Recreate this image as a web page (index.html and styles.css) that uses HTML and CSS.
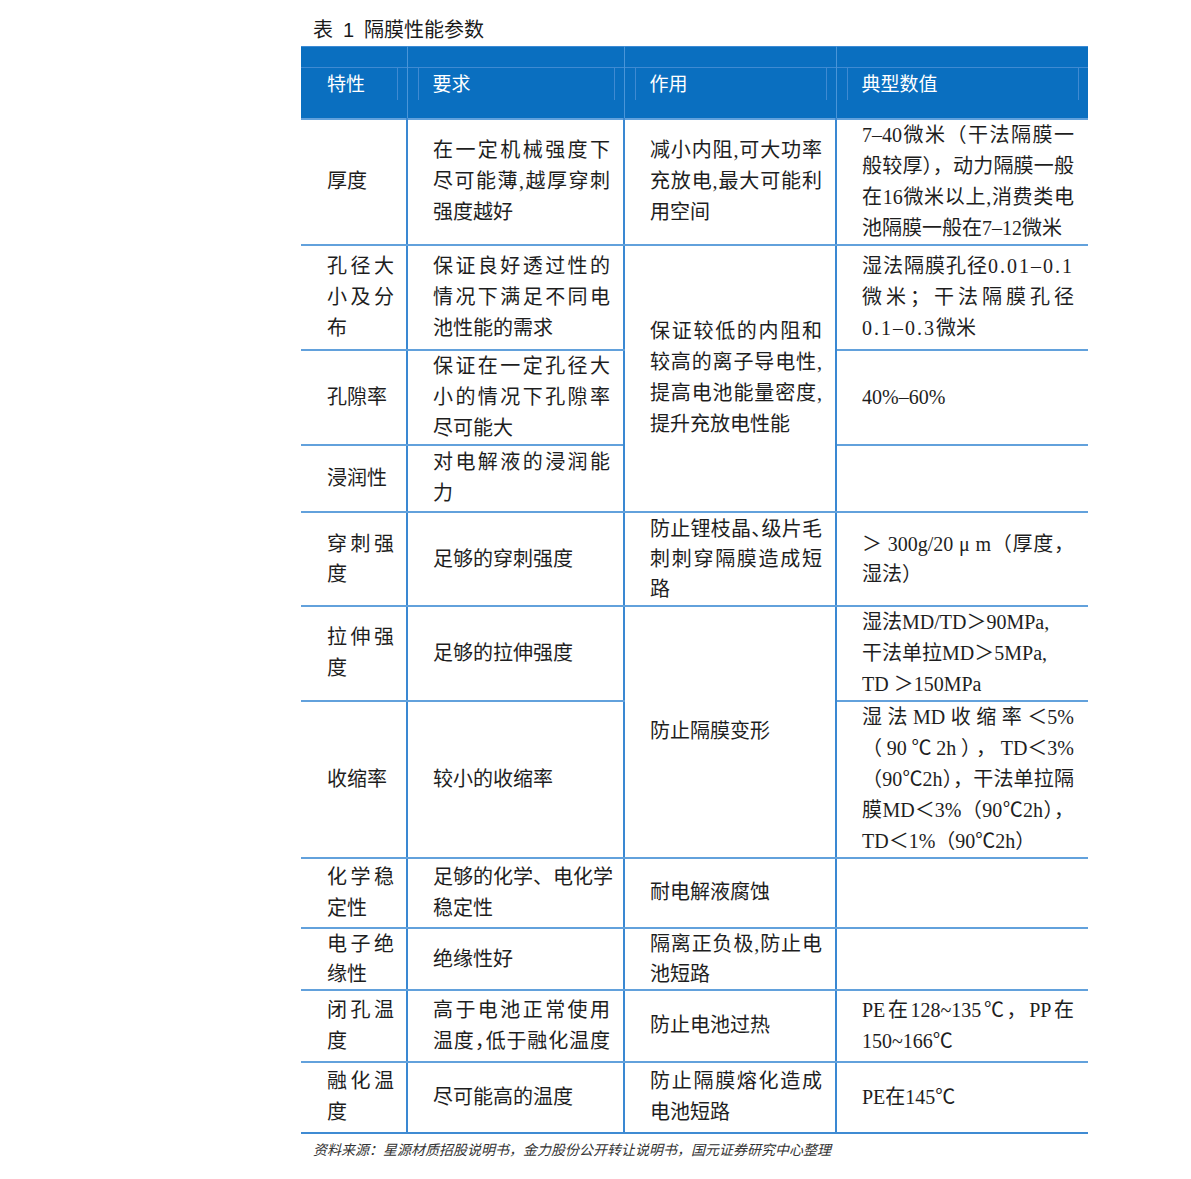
FILE: index.html
```html
<!DOCTYPE html>
<html lang="zh-CN">
<head>
<meta charset="utf-8">
<title>表 1 隔膜性能参数</title>
<link rel="stylesheet" href="styles.css">
</head>
<body>
<div class="page">
  <div class="title">表&ensp;1&ensp;隔膜性能参数</div>
  <table class="spec">
    <colgroup>
      <col class="c1"><col class="c2"><col class="c3"><col class="c4">
    </colgroup>
    <thead>
      <tr>
        <th><div class="hb"><div class="hi first">特性</div></div></th>
        <th><div class="hb"><div class="hi">要求</div></div></th>
        <th><div class="hb"><div class="hi">作用</div></div></th>
        <th><div class="hb"><div class="hi">典型数值</div></div></th>
      </tr>
    </thead>
    <tbody>
      <tr>
        <td>厚度</td>
        <td><span class="l j">在一定机械强度下</span><span class="l j">尽可能薄,越厚穿刺</span><span class="l">强度越好</span></td>
        <td><span class="l j">减小内阻,可大功率</span><span class="l j">充放电,最大可能利</span><span class="l">用空间</span></td>
        <td><span class="l j">7–40微米（干法隔膜一</span><span class="l j">般较厚<span class="hw">）</span>，动力隔膜一般</span><span class="l j">在16微米以上,消费类电</span><span class="l">池隔膜一般在7–12微米</span></td>
      </tr>
      <tr>
        <td><span class="l j">孔径大</span><span class="l j">小及分</span><span class="l">布</span></td>
        <td><span class="l j">保证良好透过性的</span><span class="l j">情况下满足不同电</span><span class="l">池性能的需求</span></td>
        <td rowspan="3"><span class="l j">保证较低的内阻和</span><span class="l j">较高的离子导电性,</span><span class="l j">提高电池能量密度,</span><span class="l">提升充放电性能</span></td>
        <td><span class="l j">湿法隔膜孔径<span class="sp">0.01–0.1</span></span><span class="l j">微米；干法隔膜孔径</span><span class="l"><span class="sp">0.1–0.3</span>微米</span></td>
      </tr>
      <tr>
        <td>孔隙率</td>
        <td><span class="l j">保证在一定孔径大</span><span class="l j">小的情况下孔隙率</span><span class="l">尽可能大</span></td>
        <td>40%–60%</td>
      </tr>
      <tr>
        <td>浸润性</td>
        <td><span class="l j">对电解液的浸润能</span><span class="l">力</span></td>
        <td></td>
      </tr>
      <tr class="tight">
        <td><span class="l j">穿刺强</span><span class="l">度</span></td>
        <td>足够的穿刺强度</td>
        <td><span class="l j">防止锂枝晶<span class="hw">、</span>级片毛</span><span class="l j">刺刺穿隔膜造成短</span><span class="l">路</span></td>
        <td><span class="l j">＞ 300g/20 μ m（厚度，</span><span class="l">湿法）</span></td>
      </tr>
      <tr>
        <td><span class="l j">拉伸强</span><span class="l">度</span></td>
        <td>足够的拉伸强度</td>
        <td rowspan="2">防止隔膜变形</td>
        <td><span class="l n">湿法MD/TD＞90MPa,</span><span class="l n">干法单拉MD＞5MPa,</span><span class="l n">TD ＞150MPa</span></td>
      </tr>
      <tr>
        <td>收缩率</td>
        <td>较小的收缩率</td>
        <td><span class="l j">湿法MD收缩率＜5%</span><span class="l j">（90℃2h），TD＜3%</span><span class="l j">（90℃2h<span class="hw">）</span>，干法单拉隔</span><span class="l j">膜MD＜3%（90℃2h<span class="hw">）</span>，</span><span class="l">TD＜1%（90℃2h）</span></td>
      </tr>
      <tr>
        <td><span class="l j">化学稳</span><span class="l">定性</span></td>
        <td><span class="l n">足够的化学、电化学</span><span class="l">稳定性</span></td>
        <td>耐电解液腐蚀</td>
        <td></td>
      </tr>
      <tr class="tight">
        <td><span class="l j">电子绝</span><span class="l">缘性</span></td>
        <td>绝缘性好</td>
        <td><span class="l j">隔离正负极,防止电</span><span class="l">池短路</span></td>
        <td></td>
      </tr>
      <tr>
        <td><span class="l j">闭孔温</span><span class="l">度</span></td>
        <td><span class="l j">高于电池正常使用</span><span class="l j">温度<span class="hw">，</span>低于融化温度</span></td>
        <td>防止电池过热</td>
        <td><span class="l j">PE在128~135℃，PP在</span><span class="l">150~166℃</span></td>
      </tr>
      <tr>
        <td><span class="l j">融化温</span><span class="l">度</span></td>
        <td>尽可能高的温度</td>
        <td><span class="l j">防止隔膜熔化造成</span><span class="l">电池短路</span></td>
        <td>PE在145℃</td>
      </tr>
    </tbody>
  </table>
  <p class="source">资料来源：星源材质招股说明书，金力股份公开转让说明书，国元证券研究中心整理</p>
</div>
</body>
</html>
```

FILE: styles.css
```css
html, body {
  margin: 0;
  padding: 0;
  background: #ffffff;
}

.page {
  width: 787px;
  margin-left: 301px;
  padding-top: 18px;
  color: #1e1e1e;
  font-family: "Liberation Serif", "Noto Sans CJK SC", serif;
}

.title {
  font-family: "Liberation Sans", "Noto Sans CJK SC", sans-serif;
  font-size: 20px;
  line-height: 25px;
  height: 25px;
  padding-left: 12px;
  margin-bottom: 3px;
  color: #1a1a1a;
}

.spec {
  width: 787px;
  table-layout: fixed;
  border-collapse: collapse;
  font-size: 20px;
  line-height: 31px;
}

.c1 { width: 106px; }
.c2 { width: 217px; }
.c3 { width: 212px; }
.c4 { width: 252px; }

.spec thead tr { height: 72px; }

.spec th {
  background: #0a6fc0;
  color: #ffffff;
  font-weight: normal;
  text-align: left;
  vertical-align: top;
  padding: 0;
  border-top: 1px solid #3d8bd4;
  border-left: 1px solid #4a95d8;
  border-right: 1px solid #4a95d8;
  font-size: 19px;
}

.spec th:first-child { border-left: none; }
.spec th:last-child { border-right: none; }

.hb {
  margin-top: 20px;
  border-top: 1px solid #3f8ad2;
  height: 32px;
  padding: 0 9px 0 10px;
  display: flex;
}

.hi {
  flex: 1;
  display: flex;
  align-items: center;
  border-left: 1px solid #3f8ad2;
  border-right: 1px solid #3f8ad2;
  padding-left: 14px;
  padding-top: 1px;
}

.hi.first {
  border-left-color: transparent;
  padding-left: 15px;
}

.spec td {
  vertical-align: middle;
  padding: 0 13px 0 25px;
  border-top: 2px solid #62a1dc;
  border-bottom: 2px solid #62a1dc;
  border-left: 2px solid #3a88d2;
  border-right: 2px solid #3a88d2;
  text-align: left;
}

.spec td:first-child {
  border-left: none;
  padding-left: 26px;
  padding-right: 12px;
}

.spec td:last-child {
  border-right: none;
  padding-right: 14px;
}

.spec tbody tr:last-child td { border-bottom-color: #3f8bd3; }

.spec tbody tr.tight { line-height: 30px; }

.spec tbody tr:nth-child(1) { height: 124px; }
.spec tbody tr:nth-child(2) { height: 105px; }
.spec tbody tr:nth-child(3) { height: 95px; }
.spec tbody tr:nth-child(4) { height: 67px; }
.spec tbody tr:nth-child(5) { height: 94px; }
.spec tbody tr:nth-child(6) { height: 95px; }
.spec tbody tr:nth-child(7) { height: 157px; }
.spec tbody tr:nth-child(8) { height: 70px; }
.spec tbody tr:nth-child(9) { height: 62px; }
.spec tbody tr:nth-child(10) { height: 72px; }
.spec tbody tr:nth-child(11) { height: 71px; }

.l {
  display: block;
}

.j {
  text-align: justify;
  text-align-last: justify;
}

.n {
  white-space: nowrap;
}

.hw {
  font-feature-settings: "halt" 1;
}

.sp {
  letter-spacing: 2px;
}

.source {
  margin: 5px 0 0 0;
  padding-left: 12px;
  font-family: "Noto Sans CJK SC", sans-serif;
  font-style: italic;
  font-size: 14px;
  line-height: 20px;
  color: #333333;
}
```
